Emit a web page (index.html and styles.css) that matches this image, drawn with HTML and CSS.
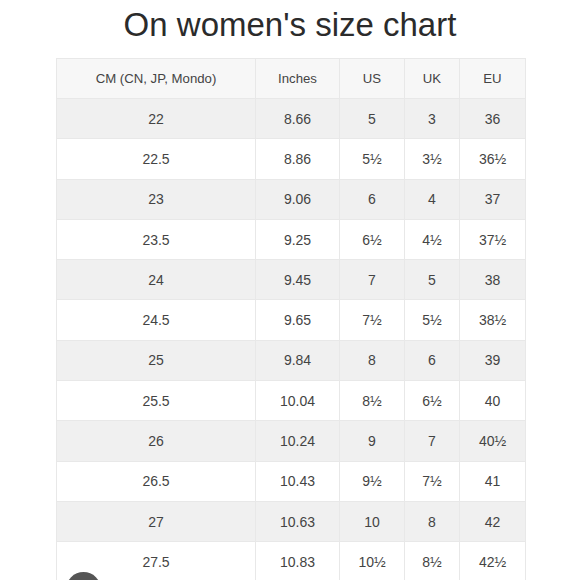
FILE: index.html
```html
<!DOCTYPE html>
<html lang="en">
<head>
<meta charset="utf-8">
<title>On women's size chart</title>
<link rel="stylesheet" href="styles.css">
</head>
<body>
<div class="page">
  <h1 class="title">On women's size chart</h1>
  <table class="chart">
    <colgroup>
      <col class="c1"><col class="c2"><col class="c3"><col class="c4"><col class="c5">
    </colgroup>
    <thead>
      <tr><th>CM (CN, JP, Mondo)</th><th>Inches</th><th>US</th><th>UK</th><th>EU</th></tr>
    </thead>
    <tbody>
      <tr><td>22</td><td>8.66</td><td>5</td><td>3</td><td>36</td></tr>
      <tr><td>22.5</td><td>8.86</td><td>5½</td><td>3½</td><td>36½</td></tr>
      <tr><td>23</td><td>9.06</td><td>6</td><td>4</td><td>37</td></tr>
      <tr><td>23.5</td><td>9.25</td><td>6½</td><td>4½</td><td>37½</td></tr>
      <tr><td>24</td><td>9.45</td><td>7</td><td>5</td><td>38</td></tr>
      <tr><td>24.5</td><td>9.65</td><td>7½</td><td>5½</td><td>38½</td></tr>
      <tr><td>25</td><td>9.84</td><td>8</td><td>6</td><td>39</td></tr>
      <tr><td>25.5</td><td>10.04</td><td>8½</td><td>6½</td><td>40</td></tr>
      <tr><td>26</td><td>10.24</td><td>9</td><td>7</td><td>40½</td></tr>
      <tr><td>26.5</td><td>10.43</td><td>9½</td><td>7½</td><td>41</td></tr>
      <tr><td>27</td><td>10.63</td><td>10</td><td>8</td><td>42</td></tr>
      <tr><td>27.5</td><td>10.83</td><td>10½</td><td>8½</td><td>42½</td></tr>
    </tbody>
  </table>
  <div class="dot"></div>
</div>
</body>
</html>
```
FILE: styles.css
```css
html, body {
  margin: 0;
  padding: 0;
  background: #ffffff;
  overflow: hidden;
}
.page {
  position: relative;
  width: 580px;
  height: 580px;
  font-family: "Liberation Sans", Arial, sans-serif;
  color: #444444;
}
.title {
  margin: 0;
  padding-top: 5px;
  height: 53px;
  font-weight: normal;
  font-size: 33px;
  line-height: 40px;
  text-align: center;
  color: #2b2b2b;
}
.chart {
  margin-left: 56px;
  width: 469px;
  border-collapse: collapse;
  table-layout: fixed;
  font-size: 14px;
}
.c1 { width: 199px; }
.c2 { width: 84px; }
.c3 { width: 65px; }
.c4 { width: 55px; }
.c5 { width: 66px; }
.chart th,
.chart td {
  border: 1px solid #e8e8e8;
  height: 39.3px;
  padding: 0;
  text-align: center;
  vertical-align: middle;
  font-weight: normal;
}
.chart th {
  background: #f7f7f7;
  height: 39px;
  font-size: 13.2px;
  line-height: 36px;
}
.chart tbody tr:nth-child(odd) td {
  background: #f0f0f0;
}
.chart tbody tr:nth-child(even) td {
  background: #ffffff;
}
.dot {
  position: absolute;
  left: 66px;
  top: 572px;
  width: 35px;
  height: 35px;
  border-radius: 50%;
  background: #555555;
}
```
